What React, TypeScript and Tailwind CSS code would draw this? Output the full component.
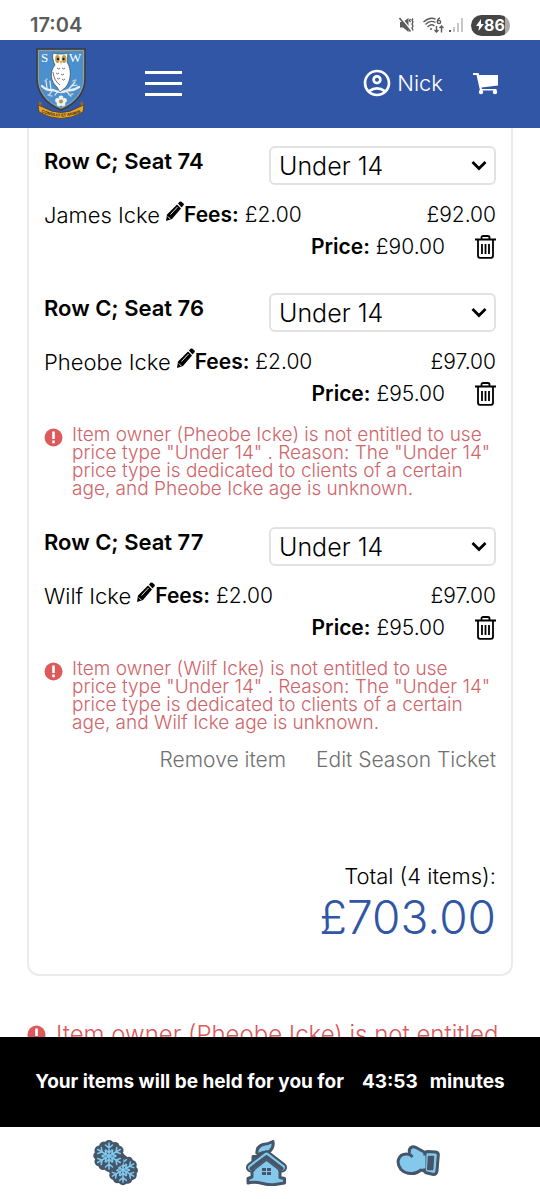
import { MdOutlineAccountCircle } from "react-icons/md";

type Seat = {
    id: string;
    seat: string;
    owner: string;
    fees: string;
    price: string;
    total: string;
    unknownAge?: boolean;
};

const seats: Seat[] = [
    { id: "seat-74", seat: "Row C; Seat 74", owner: "James Icke", fees: "£2.00", price: "£90.00", total: "£92.00" },
    { id: "seat-76", seat: "Row C; Seat 76", owner: "Pheobe Icke", fees: "£2.00", price: "£95.00", total: "£97.00", unknownAge: true },
    { id: "seat-77", seat: "Row C; Seat 77", owner: "Wilf Icke", fees: "£2.00", price: "£95.00", total: "£97.00", unknownAge: true },
];

const StatusBar = () => (
    <div className="flex h-10 shrink-0 items-center justify-between px-[30px] pt-2.5 text-[#5c5c5c]">
        <span className="text-[20px] font-semibold">17:04</span>
        <div className="flex items-center gap-1">
            <svg className="mr-1 h-4 w-4" viewBox="0 0 16 16" fill="none" stroke="currentColor" strokeWidth="1.4">
                <path d="M1 5h3l5.500-4v14L4 10.500H1z" fill="currentColor" stroke="none" />
                <path d="M1.500 0l10 12.500" stroke="#fff" strokeWidth="1.500" />
                <path d="M.5 1l11 13.500" strokeWidth="1.600" />
                <path d="M11.500 2l-1 1.500 1 1.500M14 1.500l-1 1.500 1 2-1 2 1 2-1 2 1 2.500" />
            </svg>
            <svg className="h-4 w-[22px]" viewBox="0 0 22 16" fill="none" stroke="currentColor" strokeWidth="1.4">
                <path d="M0.5 5Q6.500-.5 12.500 2M2.500 7.500Q7 2.500 12.500 5.500M4.500 10Q8 6 11.500 9" />
                <circle cx="8" cy="12" r="1" fill="currentColor" stroke="none" />
                <path d="M17 1q-3 1-2.500 4.500M13.500 9v6m-2-2l2 2 2-2M18.500 15.500V9m-2 2l2-2 2 2" />
                <circle cx="16" cy="5" r="1.600" />
            </svg>
            <svg className="h-4 w-[14px]" viewBox="0 0 14 16" fill="#c6c6c6">
                <path d="M4 10h2v5H4zM8 6h2v9H8zM12 1h2v14h-2z" />
                <path d="M0 13h2v2H0z" fill="#555" />
            </svg>
            <div className="ml-1 flex h-[21px] w-[39px] items-center justify-center rounded-full bg-gradient-to-r from-[#454545] from-88% to-[#aaa] to-88% text-[16px] font-bold text-white">
                <svg className="h-3 w-2" viewBox="0 0 8 12" fill="#fff">
                    <path d="M5 0L0 7h3L2.500 12 8 5H5z" />
                </svg>
                86
            </div>
        </div>
    </div>
);

const Crest = () => (
    <svg className="h-[71px] w-[50px]" viewBox="0 0 50 71" role="img" aria-label="Club crest">
        <path d="M1 1h48v29C49 46 39 56 25 62 11 56 1 46 1 30z" fill="#4a90cf" stroke="#3d3b37" strokeWidth="1.500" />
        <path d="M2.500 2.500h45V30C47.500 45 38 54.500 25 60 12 54.500 2.500 45 2.500 30z" fill="none" stroke="#a39d83" strokeWidth="1" />
        {/* branch */}
        <g fill="none" stroke="#e9eef2" strokeLinecap="round">
            <path d="M6 38q5 5 11 4 8 4 15 0 5 1 11-3" strokeWidth="2.400" />
            <path d="M11 40l-1-7M15 42l-1-9M33 41l6-7M36 38l5-1M30 43l5 5M16 43l-3 4M22 43l-3 4" strokeWidth="1.200" />
            <path d="M9 33l2-2M37 33l3-1M33 47l4-1M12 47l4 1" strokeWidth="1.600" stroke="#b9c4cd" />
        </g>
        {/* owl */}
        <path d="M17 5l4 1h7l4-1-1 9c5 8 4 18-1 25l-6 5-3-5c-6-5-8-15-2-22-2-4-3-8-2-12z" fill="#fff" stroke="#30343a" strokeWidth=".6" />
        <ellipse cx="21.500" cy="11" rx="2.300" ry="4" fill="#c59c45" />
        <ellipse cx="28" cy="11" rx="2.300" ry="4" fill="#c59c45" />
        <circle cx="22" cy="11" r="1.200" fill="#2b2115" />
        <circle cx="27.500" cy="11" r="1.200" fill="#2b2115" />
        <path d="M24 13h2l-1 4z" fill="#c59c45" />
        <path d="M21 20l1.500 1 1.500-1m2 0l1.500 1 1.500-1M20 25l1.500 1 1.500-1m2 1l1.500 1 1.500-1M21 30l1.500 1 1.500-1m2 1l1.500 1 1.500-1M17 24q1 9 7 13" fill="none" stroke="#4c5158" strokeWidth=".8" />
        <g fill="#fff" fontFamily="Liberation Serif, serif" fontSize="13">
            <text x="5" y="14">S</text>
            <text x="33" y="14">W</text>
        </g>
        {/* rose */}
        <g fill="#f3f3e8">
            <circle cx="25" cy="50" r="2.400" />
            <circle cx="28.500" cy="52.500" r="2.400" />
            <circle cx="27" cy="56" r="2.400" />
            <circle cx="23" cy="56" r="2.400" />
            <circle cx="21.500" cy="52.500" r="2.400" />
        </g>
        <circle cx="25" cy="53.500" r="1.600" fill="#b8a552" stroke="#687a65" strokeWidth=".6" />
        {/* scroll */}
        <path d="M5 54q-3 4 1 6M45 54q3 4-1 6" fill="none" stroke="#8a6a25" strokeWidth="3" />
        <path d="M2 57l5 2q18 11 36 0l5-2-1 7q-22 13-44 0z" fill="#e6a62c" stroke="#4a3a1a" strokeWidth=".8" />
        <path id="motto-line" d="M5 64q20 9 40 0" fill="none" />
        <text fontSize="4" fontWeight="700" fill="#2e2414" textAnchor="middle" fontFamily="Liberation Sans, sans-serif">
            <textPath href="#motto-line" startOffset="50%">CONSILIO ET ANIMIS</textPath>
        </text>
    </svg>
);

const Header = () => (
    <header className="flex h-[88px] shrink-0 items-center bg-[#3156a5] pb-0.5 pl-9 pr-[41px] text-white">
        <a href="#home">
            <Crest />
        </a>
        <button type="button" aria-label="Menu" className="ml-[59px] flex w-[37px] flex-col gap-2">
            <span className="h-[3px] w-full bg-white" />
            <span className="h-[3px] w-full bg-white" />
            <span className="h-[3px] w-full bg-white" />
        </button>
        <a href="#account" className="ml-auto flex items-center gap-1 text-[22px] font-light">
            <MdOutlineAccountCircle className="h-8 w-8" />
            Nick
        </a>
        <a href="#basket" aria-label="Basket" className="ml-[30px]">
            <svg className="h-6 w-[26px]" viewBox="0 0 26 24" fill="#fff">
                <path d="M0 2h5.500l.7 2H25v10.500L8.500 16.500l.5 1.500h14.500v1.500H7L3.500 4H0z" />
                <circle cx="8" cy="21" r="2.200" />
                <circle cx="22" cy="21" r="2.200" />
            </svg>
        </a>
    </header>
);

const PencilIcon = () => (
    <svg className="h-5 w-[18px]" viewBox="0 0 18 20" fill="#000">
        <path d="M12 2.500l1.500-1.700q1-.8 2 0l2 1.700q.8 1-.2 2L15.500 6.500zM11 3.500l4 4L6 18l-6 2 1-6.500z" />
        <path d="M4.500 13.500l7-7.500M1.800 15.500l2.500 2.500" stroke="#fff" strokeWidth=".9" />
    </svg>
);

const TrashIcon = () => (
    <svg className="h-[25px] w-[21px]" viewBox="0 0 21 25" fill="none" stroke="#000" strokeWidth="1.800">
        <path d="M0 4.500h21M6.500 4V2.500q0-1.500 1.700-1.500h4.600q1.700 0 1.700 1.500V4M3 4.500v16.300q0 2 2 2h11q2 0 2-2V4.500M7 9v10M10.500 9v10M14 9v10" />
    </svg>
);

const AlertIcon = () => (
    <svg className="h-[19px] w-[19px] shrink-0" viewBox="0 0 19 19">
        <circle cx="9.500" cy="9.500" r="9" fill="#dc5a5c" />
        <path d="M9.500 3.500v7.500M9.500 12.500v2.700" stroke="#fff" strokeWidth="2.600" />
    </svg>
);

const SeatItem = ({ item }: { item: Seat }) => (
    <section className="mb-[29px]">
        <div className="flex justify-between">
            <label htmlFor={item.id} className="text-[22px] leading-[30px] font-semibold">{item.seat}</label>
            <div className="relative w-[227px]">
                <select id={item.id} className="h-[39px] w-full appearance-none rounded-md border-2 border-[#e2e2e2] bg-white pl-2 text-[25px] font-light leading-8">
                    <option>Under 14</option>
                    <option>Adult</option>
                </select>
                <svg className="pointer-events-none absolute right-[9px] top-[14px] h-3 w-4" viewBox="0 0 16 12" fill="none" stroke="#000" strokeWidth="2.800">
                    <path d="M1.500 2L8 8.500 14.500 2" />
                </svg>
            </div>
        </div>
        <div className="mt-3.5 flex h-8 items-center text-[21px]">
            <span className="text-[22px]">{item.owner}</span>
            <button type="button" aria-label={`Edit ${item.owner}`} className="mb-2 ml-1.5">
                <PencilIcon />
            </button>
            <span><b className="font-semibold">Fees:</b> {item.fees}</span>
            <span className="ml-auto">{item.total}</span>
        </div>
        <div className="flex h-8 items-center justify-end text-[21px]">
            <span><b className="font-semibold">Price:</b> {item.price}</span>
            <button type="button" aria-label={`Delete ${item.seat}`} className="ml-[30px]">
                <TrashIcon />
            </button>
        </div>
        {item.unknownAge && (
            <div className="mt-4 flex gap-[9px] text-[19px] leading-[18px] text-[#cf6469]">
                <div className="pt-0.5"><AlertIcon /></div>
                <p>
                    Item owner ({item.owner}) is not entitled to use price type "Under 14" . Reason: The "Under 14" price type is dedicated to clients of a certain age, and {item.owner} age is unknown.
                </p>
            </div>
        )}
    </section>
);

const outline = { stroke: "#46566a", strokeWidth: 3, strokeLinejoin: "round" as const };

const Snowflake = ({ x, y, size }: { x: number; y: number; size: number }) => (
    <g transform={`translate(${x} ${y}) scale(${size})`}>
        {[0, 60, 120, 180, 240, 300].map((angle) => (
            <g key={angle} transform={`rotate(${angle})`}>
                <circle cx="0" cy="-11" r="5" fill="#46566a" />
                <circle cx="6" cy="-9.500" r="4.500" fill="#46566a" />
            </g>
        ))}
        <circle r="12" fill="#46566a" />
        {[0, 60, 120, 180, 240, 300].map((angle) => (
            <path key={angle} transform={`rotate(${angle})`} d="M0 0v-13M-3.500-11L0-8l3.500-3M-3-6L0-3l3-3" fill="none" stroke="#7fc8ec" strokeWidth="1.600" strokeLinecap="round" />
        ))}
    </g>
);

const BottomNav = () => (
    <nav className="grid h-[72px] shrink-0 grid-cols-3 place-items-center bg-white pl-10 pr-[46px]">
        <button type="button" aria-label="Recent apps">
            <svg className="h-[46px] w-[46px]" viewBox="0 0 46 46">
                <Snowflake x={30} y={30} size={0.95} />
                <Snowflake x={16} y={16} size={1} />
            </svg>
        </button>
        <button type="button" aria-label="Home">
            <svg className="h-[46px] w-[42px]" viewBox="0 0 42 46" fill="#84c8ec" {...outline}>
                <path d="M7 26v-9.500h6.500v5" />
                <path d="M11 14Q10 7 17 4.500q5-.5 10-3 1 6-3 9.500-3 2-7 1.500-3 .5-6 3.500" />
                <path d="M6 28v9l-4 1.500V43c10-3 17 3 27 1.500L38.500 43v-4.500L34 37.500V28L20 16z" />
                <path d="M5 27.500L20.500 15.500 36 27.500" fill="none" strokeWidth="10" strokeLinecap="round" />
                <path d="M5 27.500L20.500 15.500 36 27.500" fill="none" stroke="#84c8ec" strokeWidth="6" strokeLinecap="round" />
                <path d="M5.500 28.500L20.500 17l15 11.500" fill="none" strokeWidth="4" strokeLinecap="round" />
                <path d="M9 30l11.500-9L32 30v6H9z" stroke="none" />
                <path d="M16 28h4v3h-4zM21 28h4v3h-4zM16 32h4v3h-4zM21 32h4v3h-4z" fill="#46566a" stroke="none" />
            </svg>
        </button>
        <button type="button" aria-label="Back" className="mb-1">
            <svg className="h-8 w-11" viewBox="0 0 44 32" fill="#84c8ec" {...outline}>
                <path d="M14 8q-2-3 1-5.500 2-1.500 5 0L29 7.500V26l-4-1q-5 4-10 3.500-6 0-10-4-4-5-2.500-10Q5 7.500 14 9.500l2.500 2.500" />
                <path d="M31.500 6.500l8 .5q3 .5 2.800 3L41 26q-.5 3.500-3.500 3.500L31 28q-2.500-.5-2.500-3l.5-16q.3-2.500 2.500-2.500z" />
                <path d="M27.500 10.500v13" stroke="#84c8ec" strokeWidth="4" />
                <path d="M32.500 11.500h5l-.8 13h-5z" fill="#46566a" strokeWidth="1.500" />
            </svg>
        </button>
    </nav>
);

const App = () => {
    return (
        <div className="flex h-screen flex-col overflow-hidden bg-white font-['Inter',sans-serif] text-black">
            <StatusBar />
            <Header />
            <main className="min-h-0 flex-1 overflow-hidden px-[27px] text-[22px] font-light">
                <div className="rounded-b-xl border-x-2 border-b-2 border-[#ebebeb] px-[15px] pb-8 pt-[18px]">
                    {seats.map((item, i) => (
                        <div key={item.id} className={i === 0 ? "pb-px" : ""}>
                            <SeatItem item={item} />
                        </div>
                    ))}
                    <div className="-mt-[17px] flex justify-end gap-[30px] text-[21px] leading-8 text-[#707070]">
                        <button type="button">Remove item</button>
                        <a href="#edit">Edit Season Ticket</a>
                    </div>
                    <div className="mt-[84px] text-right">
                        <p className="leading-8">Total (4 items):</p>
                        <p className="text-[46px] leading-[50px] text-[#3156a5]">£703.00</p>
                    </div>
                </div>
                <div className="mt-[47px] flex gap-2.5 text-[24px] leading-6 text-[#d9595d]">
                    <div className="pt-0.5"><AlertIcon /></div>
                    <p>Item owner (Pheobe Icke) is not entitled to use price type "Under 14" .</p>
                </div>
            </main>
            <div className="flex h-[90px] shrink-0 items-center justify-center bg-black text-[19px] font-bold text-white">
                <span>Your items will be held for you for</span>
                <span className="ml-[18px] mr-3">43:53</span>
                <span>minutes</span>
            </div>
            <BottomNav />
        </div>
    );
};

export default App;
